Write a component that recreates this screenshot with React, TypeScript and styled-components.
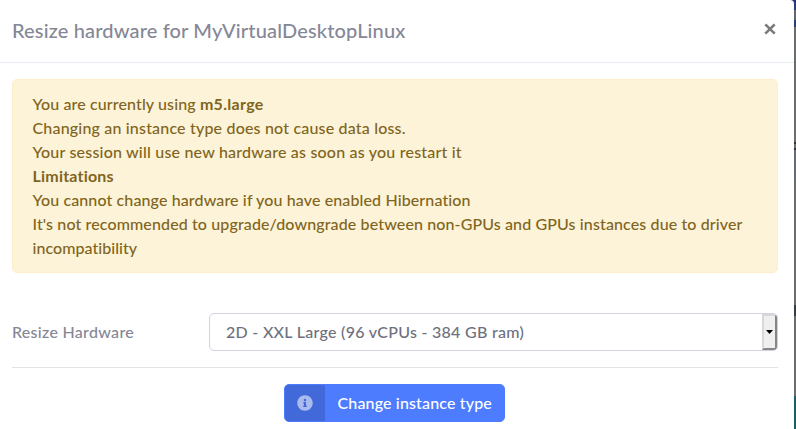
import React from "react";
import styled, { createGlobalStyle } from "styled-components";

const Global = createGlobalStyle`
  * { box-sizing: border-box; }
  body { margin: 0; background: #737373; font-family: Lato, "Noto Sans", sans-serif; font-size: 16px; line-height: 24px; font-weight: 500; font-variant-ligatures: none; overflow: hidden; }
`;

const Screen = styled.div`
  width: 796px;
  height: 429px;
  overflow: hidden;
  background: linear-gradient(#273d80 0 10px, #626672 10px 20px, #273d80 20px 27px, #6b6d6d 27px 142px, #303236 142px 144px, #6b6d6d 144px 148px, #303236 148px 150px, #686b74 150px 180px, #6b6d6d 180px 305px, #383b40 305px 316px, #6b6d6d 316px 396px, #1c5e68 396px);
`;

const Dialog = styled.section`
  width: 794px;
  height: 429px;
  background: #fff;
  border-top-right-radius: 4px;
`;

const Header = styled.header`
  display: flex;
  justify-content: space-between;
  height: 63px;
  padding: 16px 16px 0 12px;
  border-bottom: 1px solid #eaecf4;
`;

const Title = styled.h5`
  margin: 0;
  font-size: 20px;
  line-height: 29px;
  font-weight: 500;
  color: #858796;
`;

const Close = styled.button`
  width: 16px;
  height: 26px;
  padding: 0;
  border: 0;
  background: none;
  color: #7b7b7b;
  display: grid;
  place-items: center;
`;

const Body = styled.div`
  padding: 16px 16px 0 12px;
`;

const Alert = styled.div`
  height: 194px;
  padding: 12px 19.5px;
  border: 1px solid #fceec9;
  border-radius: 5px;
  background: #fdf3d8;
  color: #806520;
`;

const Text = styled.span<{ $track?: number; $bold?: boolean }>`
  letter-spacing: ${(p) => p.$track ?? 0}px;
  font-weight: ${(p) => (p.$bold ? 700 : "inherit")};
  white-space: pre;
`;

const Line = styled.div`
  height: 24px;
  white-space: pre;
`;

const Row = styled.div`
  display: grid;
  grid-template-columns: 197px 1fr;
  align-items: center;
  margin-top: 40px;
  padding-bottom: 16px;
  border-bottom: 1px solid #e3e3e6;
  color: #858796;
`;

const Select = styled.div`
  display: flex;
  justify-content: space-between;
  align-items: stretch;
  height: 38px;
  border: 1px solid #d1d3e2;
  border-radius: 5px;
  overflow: hidden;
  color: #6e707e;
  padding-left: 16px;
  line-height: 36px;
`;

const Arrow = styled.span`
  width: 15px;
  display: grid;
  place-items: center;
  background: #efefef;
  border: 2px solid;
  border-color: #d8d8d8 #858585 #858585 #d8d8d8;
`;

const Footer = styled.footer`
  display: flex;
  justify-content: center;
  padding: 16px 1px 0 0;
  margin-right: 1px;
`;

const Action = styled.button`
  display: flex;
  width: 221px;
  height: 38px;
  padding: 0;
  border: 1px solid #4e7cff;
  border-radius: 5px;
  overflow: hidden;
  background: #4e7cff;
  color: #fff;
  font: inherit;
`;

const IconBox = styled.span`
  width: 40px;
  height: 36px;
  display: grid;
  place-items: center;
  background: #4269d9;
`;

const ActionLabel = styled.span`
  padding-left: 13px;
  line-height: 36px;
`;

export default function App() {
  return (
    <>
      <Global />
      <Screen>
        <Dialog>
          <Header>
            <Title><Text $track={0.15}>Resize hardware for MyVirtualDesktopLinux</Text></Title>
            <Close aria-label="Close">
              <svg width="12" height="12" viewBox="0 0 12 12" stroke="currentColor" strokeWidth="2.6">
                <path d="M1.3 1.3 10.7 10.7M10.7 1.3 1.3 10.7" />
              </svg>
            </Close>
          </Header>
          <Body>
            <Alert>
              <Line><Text $track={0.12}>You are currently using </Text><Text $bold $track={0.3}>m5.large</Text></Line>
              <Line><Text $track={0.18}>Changing an instance type does not cause data loss.</Text></Line>
              <Line><Text $track={0.2}>Your session will use new hardware as soon as you restart it</Text></Line>
              <Line><Text $bold $track={0.2}>Limitations</Text></Line>
              <Line><Text $track={0.12}>You cannot change hardware if you have enabled Hibernation</Text></Line>
              <Line><Text $track={0.12}>It's not recommended to upgrade/downgrade between non-GPUs and GPUs instances due to driver</Text></Line>
              <Line><Text $track={0.05}>incompatibility</Text></Line>
            </Alert>
            <Row>
              <Text $track={0.29}>Resize Hardware</Text>
              <Select>
                <Text $track={0.28}>2D - XXL Large (96 vCPUs - 384 GB ram)</Text>
                <Arrow>
                  <svg width="7" height="4" viewBox="0 0 7 4"><path d="M0 0H7L3.5 4Z" fill="#000" /></svg>
                </Arrow>
              </Select>
            </Row>
            <Footer>
              <Action>
                <IconBox>
                  <svg width="16" height="16" viewBox="0 0 512 512">
                    <path fill="#a9bbef" d="M256 8C119 8 8 119 8 256s111 248 248 248 248-111 248-248S393 8 256 8zm0 110c23 0 42 19 42 42s-19 42-42 42-42-19-42-42 19-42 42-42zm56 254c0 7-5 12-12 12h-88c-7 0-12-5-12-12v-24c0-7 5-12 12-12h12v-64h-12c-7 0-12-5-12-12v-24c0-7 5-12 12-12h64c7 0 12 5 12 12v100h12c7 0 12 5 12 12v24z" />
                  </svg>
                </IconBox>
                <ActionLabel><Text $track={0.15}>Change instance type</Text></ActionLabel>
              </Action>
            </Footer>
          </Body>
        </Dialog>
      </Screen>
    </>
  );
}
